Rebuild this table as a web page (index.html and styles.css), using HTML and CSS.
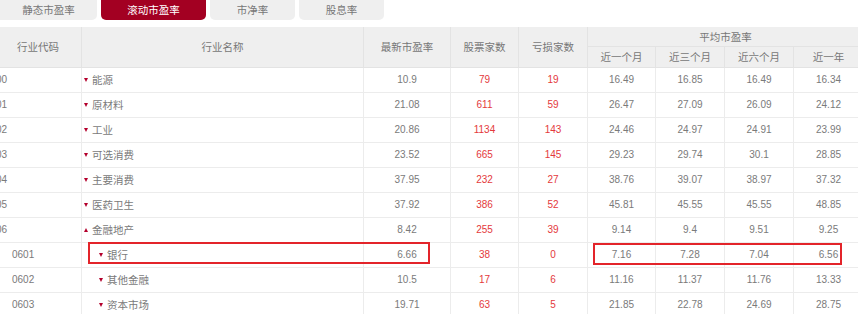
FILE: index.html
```html
<!DOCTYPE html>
<html lang="zh-CN">
<head>
<meta charset="utf-8">
<title>行业市盈率</title>
<link rel="stylesheet" href="styles.css">
</head>
<body>
<div class="page">
  <div class="tabs">
    <div class="tab tab-1">静态市盈率</div>
    <div class="tab tab-2 active">滚动市盈率</div>
    <div class="tab tab-3">市净率</div>
    <div class="tab tab-4">股息率</div>
  </div>
  <div class="table-wrap">
    <table class="grid">
      <colgroup>
        <col class="c-code"><col class="c-name"><col class="c-pe"><col class="c-cnt"><col class="c-loss">
        <col class="c-m1"><col class="c-m3"><col class="c-m6"><col class="c-y1">
      </colgroup>
      <thead>
        <tr class="h1">
          <th rowspan="2">行业代码</th>
          <th rowspan="2">行业名称</th>
          <th rowspan="2">最新市盈率</th>
          <th rowspan="2">股票家数</th>
          <th rowspan="2">亏损家数</th>
          <th colspan="4">平均市盈率</th>
        </tr>
        <tr class="h2">
          <th>近一个月</th><th>近三个月</th><th>近六个月</th><th>近一年</th>
        </tr>
      </thead>
      <tbody>
        <tr><td class="code">00</td><td class="name"><span class="tri down"></span>能源</td><td>10.9</td><td class="red">79</td><td class="red">19</td><td>16.49</td><td>16.85</td><td>16.49</td><td>16.34</td></tr>
        <tr><td class="code">01</td><td class="name"><span class="tri down"></span>原材料</td><td>21.08</td><td class="red">611</td><td class="red">59</td><td>26.47</td><td>27.09</td><td>26.09</td><td>24.12</td></tr>
        <tr><td class="code">02</td><td class="name"><span class="tri down"></span>工业</td><td>20.86</td><td class="red">1134</td><td class="red">143</td><td>24.46</td><td>24.97</td><td>24.91</td><td>23.99</td></tr>
        <tr><td class="code">03</td><td class="name"><span class="tri down"></span>可选消费</td><td>23.52</td><td class="red">665</td><td class="red">145</td><td>29.23</td><td>29.74</td><td>30.1</td><td>28.85</td></tr>
        <tr><td class="code">04</td><td class="name"><span class="tri down"></span>主要消费</td><td>37.95</td><td class="red">232</td><td class="red">27</td><td>38.76</td><td>39.07</td><td>38.97</td><td>37.32</td></tr>
        <tr><td class="code">05</td><td class="name"><span class="tri down"></span>医药卫生</td><td>37.92</td><td class="red">386</td><td class="red">52</td><td>45.81</td><td>45.55</td><td>45.55</td><td>48.85</td></tr>
        <tr><td class="code">06</td><td class="name"><span class="tri up"></span>金融地产</td><td>8.42</td><td class="red">255</td><td class="red">39</td><td>9.14</td><td>9.4</td><td>9.51</td><td>9.25</td></tr>
        <tr><td class="code sub">0601</td><td class="name sub"><span class="tri down"></span>银行</td><td>6.66</td><td class="red">38</td><td class="red">0</td><td>7.16</td><td>7.28</td><td>7.04</td><td>6.56</td></tr>
        <tr><td class="code sub">0602</td><td class="name sub"><span class="tri down"></span>其他金融</td><td>10.5</td><td class="red">17</td><td class="red">6</td><td>11.16</td><td>11.37</td><td>11.76</td><td>13.33</td></tr>
        <tr><td class="code sub">0603</td><td class="name sub"><span class="tri down"></span>资本市场</td><td>19.71</td><td class="red">63</td><td class="red">5</td><td>21.85</td><td>22.78</td><td>24.69</td><td>28.75</td></tr>
      </tbody>
    </table>
    <div class="mark mark-name"></div>
    <div class="mark mark-avg"></div>
  </div>
</div>
</body>
</html>
```

FILE: styles.css
```css
html, body {
  margin: 0;
  padding: 0;
  overflow: hidden;
  background: #fff;
}

body {
  font-family: "Liberation Sans", "Noto Sans CJK SC", sans-serif;
  font-size: 10.5px;
  color: #666;
}

.page {
  width: 869px;
  margin-left: -6px;
}

.tabs {
  display: flex;
  gap: 4px;
  height: 20px;
  padding-left: 6px;
}

.tab {
  height: 20px;
  line-height: 20px;
  text-align: center;
  background: #efefef;
  color: #777;
  border-radius: 0 0 5px 5px;
}

.tab-1 { width: 97px; border-radius: 0 0 5px 0; }
.tab-2 { width: 105px; }
.tab-3 { width: 85px; }
.tab-4 { width: 85px; }

.tab.active {
  background: #a30022;
  color: #fff;
}

.table-wrap {
  position: relative;
  margin-top: 7px;
}

.grid {
  width: 869px;
  border-collapse: collapse;
  table-layout: fixed;
}

.c-code { width: 87px; }
.c-name { width: 282px; }
.c-pe { width: 87px; }
.c-cnt { width: 68px; }
.c-loss { width: 69px; }
.c-m1 { width: 68px; }
.c-m3 { width: 69px; }
.c-m6 { width: 69px; }
.c-y1 { width: 70px; }

.grid th {
  background: #efefef;
  font-weight: normal;
  color: #777;
  padding: 0;
  border: 1px solid #e3e3e3;
  border-top: 0;
}

.grid tr.h1 { height: 19px; }
.grid tr.h2 { height: 21px; }

.grid td {
  padding: 0;
  text-align: center;
  color: #7a7a7a;
  font-size: 10px;
  border: 1px solid #ececec;
  height: 24px;
}

.grid td.red { color: #e4393c; }

.grid td.code { text-align: left; padding-left: 1px; }
.grid td.code.sub { padding-left: 17px; }

.grid td.name {
  text-align: left;
  padding-left: 2px;
  font-size: 10.5px;
}
.grid td.name.sub { padding-left: 17px; }

.tri {
  display: inline-block;
  width: 0;
  height: 0;
  border-left: 2.5px solid transparent;
  border-right: 2.5px solid transparent;
  margin-right: 4px;
  vertical-align: 2px;
}
.tri.down { border-top: 4px solid #b4002c; }
.tri.up { border-bottom: 4px solid #b4002c; }

.mark {
  position: absolute;
  box-sizing: border-box;
  border: 2px solid #e3242a;
  height: 22px;
}
.mark-name { left: 94px; top: 215px; width: 342px; }
.mark-avg { left: 599px; top: 216px; width: 249px; }
```
